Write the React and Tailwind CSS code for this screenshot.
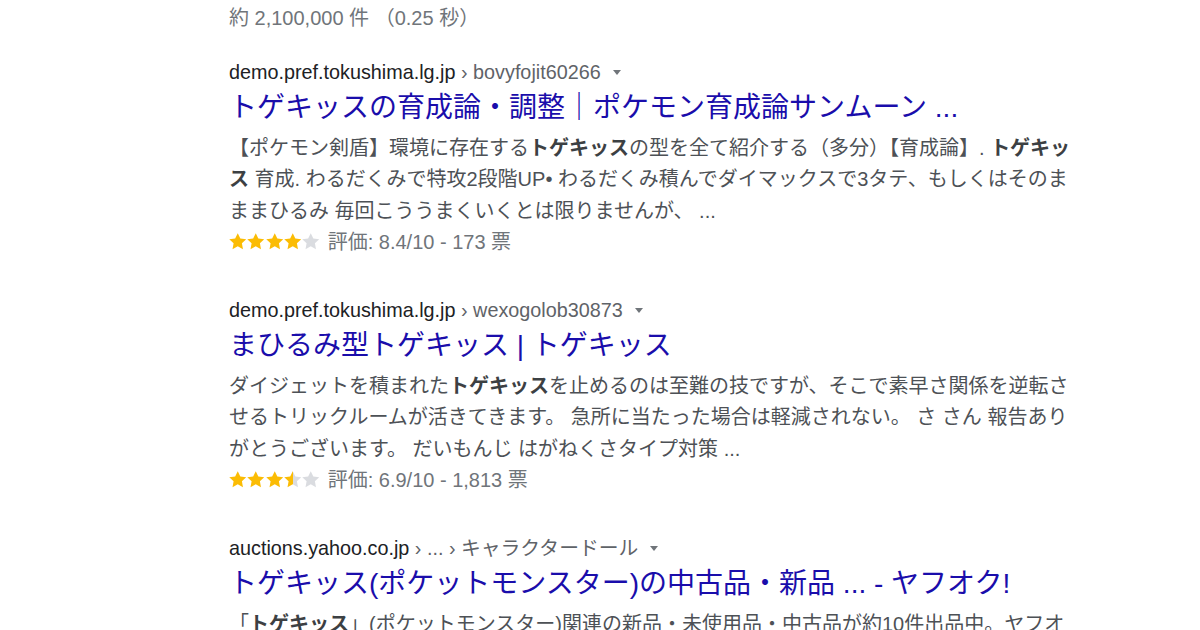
import React from "react";

const FONT = { fontFamily: '"Liberation Sans", Arial, "Noto Sans CJK JP", sans-serif' };

// one star, optionally filled only to a fraction
const Star = ({ fill = 1, id }) => (
  <svg width="17.5" height="16.5" viewBox="0 0 24 23" className="shrink-0">
    <defs>
      <linearGradient id={id}>
        <stop offset={fill} stopColor="#fbbc04" />
        <stop offset={fill} stopColor="#dadce0" />
      </linearGradient>
    </defs>
    <path
      d="M12 0.3l3.6 7.4 8.2 1.1-6 5.6 1.5 8.1L12 18.6l-7.3 3.9 1.5-8.1-6-5.6 8.2-1.1z"
      fill={`url(#${id})`}
    />
  </svg>
);

const Rating = ({ stars, text, name }) => (
  <div className="flex items-center h-[30px] text-[20px] text-[#70757a]">
    <div className="flex gap-[0.8px] mr-[8px] -mt-[2px]">
      {stars.map((f, i) => (
        <Star key={i} fill={f} id={`${name}-${i}`} />
      ))}
    </div>
    <span className="leading-[30px]">{text}</span>
  </div>
);

const Caret = () => (
  <span className="inline-block ml-[12px] align-middle border-x-[4px] border-x-transparent border-t-[5px] border-t-[#70757a] -mt-[2px]" />
);

const Result = ({ domain, path, title, lines, rating }) => (
  <div className="h-[238px]">
    <div className="h-[31.5px] leading-[31.5px] text-[19.8px] text-[#202124] whitespace-nowrap">
      {domain}
      <span className="text-[#5f6368]"> › {path}</span>
      <Caret />
    </div>
    <h3 className="mt-[2px] h-[36px] leading-[36px] text-[28px] text-[#1a0dab] whitespace-nowrap">
      {title}
    </h3>
    <div className="mt-[6.7px] text-[20px] leading-[31.6px] text-[#4d5156]">
      {lines.map((l, i) => (
        <div key={i} className="whitespace-nowrap">
          {l}
        </div>
      ))}
    </div>
    {rating}
  </div>
);

const B = ({ children }) => <b className="font-bold text-[#3c4043]">{children}</b>;

export default function App() {
  return (
    <div className="w-[1200px] h-[630px] overflow-hidden bg-white" style={FONT}>
      <div className="pl-[229px] pt-[3px]">
        <div className="h-[31.5px] leading-[31.5px] text-[20px] text-[#70757a]">
          約 2,100,000 件 （0.25 秒）
        </div>
        <div className="mt-[22px]">
          <Result
            domain="demo.pref.tokushima.lg.jp"
            path="bovyfojit60266"
            title="トゲキッスの育成論・調整｜ポケモン育成論サンムーン ..."
            lines={[
              <>
                【ポケモン剣盾】環境に存在する<B>トゲキッス</B>の型を全て紹介する（多分）【育成論】. <B>トゲキッ</B>
              </>,
              <>
                <B>ス</B> 育成. わるだくみで特攻2段階UP• わるだくみ積んでダイマックスで3タテ、もしくはそのま
              </>,
              <>ままひるみ 毎回こううまくいくとは限りませんが、 ...</>,
            ]}
            rating={<Rating name="r1" stars={[1, 1, 1, 1, 0]} text="評価: 8.4/10 - 173 票" />}
          />
          <Result
            domain="demo.pref.tokushima.lg.jp"
            path="wexogolob30873"
            title="まひるみ型トゲキッス | トゲキッス"
            lines={[
              <>
                ダイジェットを積まれた<B>トゲキッス</B>を止めるのは至難の技ですが、そこで素早さ関係を逆転さ
              </>,
              <>せるトリックルームが活きてきます。 急所に当たった場合は軽減されない。 さ さん 報告あり</>,
              <>がとうございます。 だいもんじ はがねくさタイプ対策 ...</>,
            ]}
            rating={<Rating name="r2" stars={[1, 1, 1, 0.5, 0]} text="評価: 6.9/10 - 1,813 票" />}
          />
          <Result
            domain="auctions.yahoo.co.jp"
            path="... › キャラクタードール"
            title="トゲキッス(ポケットモンスター)の中古品・新品 ... - ヤフオク!"
            lines={[
              <>
                「<B>トゲキッス</B>」(ポケットモンスター)関連の新品・未使用品・中古品が約10件出品中。ヤフオ
              </>,
            ]}
          />
        </div>
      </div>
    </div>
  );
}
